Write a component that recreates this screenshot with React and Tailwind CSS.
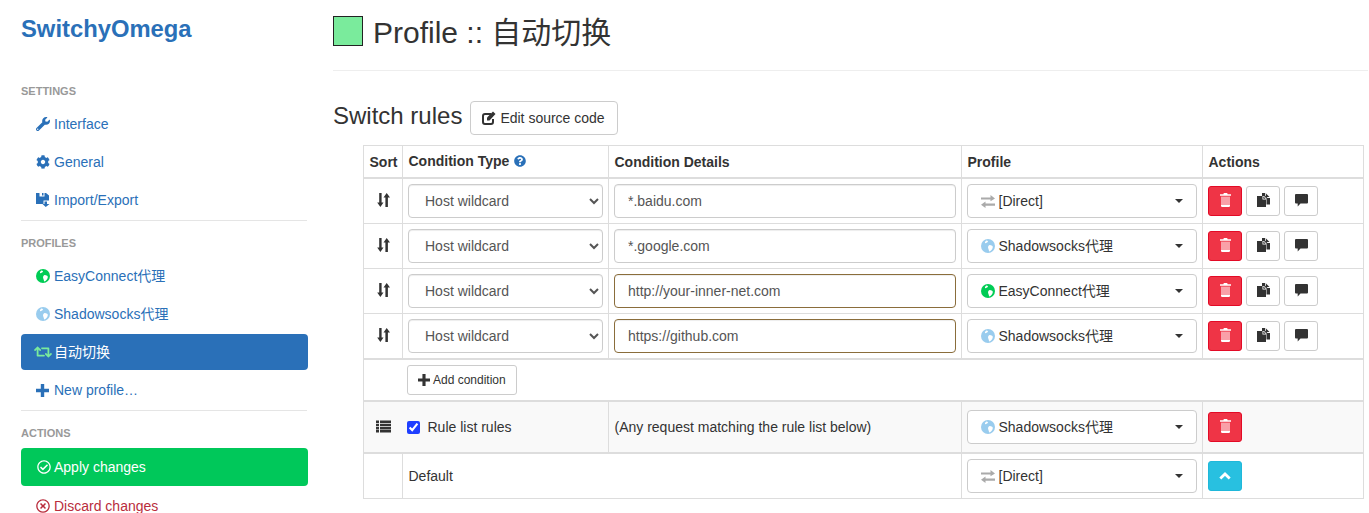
import React from "react";
import { FaWrench, FaCog, FaRetweet, FaRegCheckCircle, FaRegTimesCircle, FaQuestionCircle } from "react-icons/fa";

const Sv = ({ w = 14, h = 14, vb, className, children }) => (
  <svg width={w} height={h} viewBox={vb || `0 0 ${w} ${h}`} className={className} fill="currentColor">{children}</svg>
);
const SaveI = ({ className }) => (
  <Sv w={14} h={14} className={className}>
    <path d="M0 0h3.500v3.500h5V0h1.500L13 2.500V7.500H7.500V11H0z" />
    <path d="M6 0h1.500v2.500H6z" />
    <path d="M8.500 8.500h2.500V11h2.500L9.750 14 6.500 11h2z" />
  </Sv>
);
const PlusI = ({ className, s = 13 }) => (
  <Sv w={s} h={s} vb="0 0 13 13" className={className}><path d="M4.800 0h3.400v4.800H13v3.400H8.200V13H4.800V8.200H0V4.800h4.800z" /></Sv>
);
const SortI = () => (
  <Sv w={13} h={14} className="text-[#333]">
    <path d="M2.200 0h2.400v9.500h1.900L3.400 14 .2 9.500h2z" />
    <path d="M8.400 14V4.500H6.500L9.700 0 13 4.500h-2.100V14z" />
  </Sv>
);
const ListI = () => (
  <Sv w={15} h={13} className="text-[#333]">
    <path d="M0 .5h3v2.500H0zM4 .5h11v2.500H4zM0 3.700h3v2.500H0zM4 3.700h11v2.500H4zM0 6.900h3v2.500H0zM4 6.900h11v2.500H4zM0 10.100h3v2.500H0zM4 10.100h11v2.500H4z" />
  </Sv>
);
const TrashI = () => (
  <Sv w={11} h={14} className="mb-[3px]">
    <path fill="#fff" d="M3.800 0h3.400l.4 1.200H11v1.600H0V1.200h3.400z" />
    <path fill="#f9a0a8" d="M1 3.600h9v8.400H1z" />
    <path fill="#fff" d="M1 12h9v.8q0 1.200-1.200 1.200H2.200Q1 14 1 12.800z" />
  </Sv>
);
const CopyI = () => (
  <Sv w={13} h={14} className="mb-[2px] text-[#333]">
    <path d="M5 0h3.200v2.500L10.500 5H13v6.500H9.500V5.500L7 3H5z" />
    <path d="M9 0.500l3.500 3.500H9z" />
    <path d="M0 3h5.500v3.500H9V14H0z" />
    <path d="M6.300 3.300 8.700 5.700H6.300z" />
  </Sv>
);
const CommentI = () => (
  <Sv w={13} h={13} className="mb-[2px] text-[#333]">
    <path d="M1 0h11q1 0 1 1v7.500q0 1-1 1H5.500L2.700 12.500V9.500H1q-1 0-1-1V1q0-1 1-1z" />
  </Sv>
);
const TransferI = () => (
  <Sv w={14} h={13} className="text-[#aaa]">
    <path d="M0 2.500h9.500V0L14 3.500 9.500 6.300V4.500H0z" />
    <path d="M14 8.500H4.500V6.500L0 9.800 4.500 13v-2.200H14z" />
  </Sv>
);
const EditI = () => (
  <svg width="14" height="14" viewBox="0 0 14 14" className="text-[#333]">
    <path d="M9 3H3Q1 3 1 5v6q0 2 2 2h6q2 0 2-2V8" fill="none" stroke="currentColor" strokeWidth="2" />
    <path d="M5 9.500V6.500L11 .5l2.500 2.500L7.500 9.500z" fill="currentColor" />
  </svg>
);
const Globe = ({ color }) => (
  <svg width="14" height="14" viewBox="0 0 14 14">
    <circle cx="7" cy="7" r="7" fill={color} />
    <path fill="#fff" d="M5.500 1.500C4 2.300 3.500 3.500 4.300 4.300 5.500 3.800 6.500 3.500 7 2.500 6.800 1.800 6 1.500 5.500 1.500z" />
    <path fill="#fff" d="M8.500 6c1 0 2 .5 3 1 .5 1 .3 2-.3 3-1 1.500-2 2.300-3 2.500-.5-1-.5-2.200-1-3.200C6.700 8 7.500 6.500 8.500 6z" />
  </svg>
);
const ChevronI = () => (
  <svg width="12" height="8" viewBox="0 0 12 8" fill="none">
    <path d="M1.300 6.500 6 2l4.700 4.500" stroke="#fff" strokeWidth="2.800" />
  </svg>
);

const NavLink = ({ icon, children, className = "" }) => (
  <a className={`flex h-[38px] items-center pl-[15px] text-[14px] text-[#2a70b8] ${className}`}>
    <span className="flex w-[18px] shrink-0">{icon}</span>
    {children}
  </a>
);
const Label = ({ children }) => (
  <div className="text-[11px] leading-[16px] font-bold uppercase text-[#999]">{children}</div>
);

const TypeSelect = () => (
  <select defaultValue="h" className="block h-[34px] w-full rounded-[4px] border border-[#ccc] bg-white px-3 text-[14px] text-[#555] shadow-[inset_0_1px_1px_rgba(0,0,0,0.075)]">
    <option value="h">Host wildcard</option>
  </select>
);
const Field = ({ value, warn }) => (
  <input
    readOnly
    value={value}
    className={`block h-[34px] w-full rounded-[4px] border bg-white px-[13px] text-[14px] text-[#555] shadow-[inset_0_1px_1px_rgba(0,0,0,0.075)] ${warn ? "border-[#8a6d3b]" : "border-[#ccc]"}`}
  />
);
const ProfileBtn = ({ icon, label }) => (
  <button className="flex h-[34px] w-full items-center rounded-[4px] border border-[#ccc] bg-white pr-[13px] pl-[13px] text-[14px] text-[#333]">
    <span className="flex w-[17.5px] shrink-0">{icon}</span>
    <span className="flex-1 text-left">{label}</span>
    <span className="h-0 w-0 border-x-4 border-t-4 border-x-transparent border-t-[#333]" />
  </button>
);
const SmallBtn = ({ children, className }) => (
  <button className={`flex h-[30px] w-[34px] items-center justify-center rounded-[3px] border ${className}`}>{children}</button>
);
const Del = () => <SmallBtn className="border-[#e30a26] bg-[#ef3446]"><TrashI /></SmallBtn>;
const White = ({ children }) => <SmallBtn className="border-[#ccc] bg-white">{children}</SmallBtn>;

const direct = <TransferI />;
const ss = <Globe color="#99ccee" />;
const ec = <Globe color="#00cc55" />;

const rows = [
  { v: "*.baidu.com", icon: direct, p: "[Direct]" },
  { v: "*.google.com", icon: ss, p: "Shadowsocks代理" },
  { v: "http://your-inner-net.com", icon: ec, p: "EasyConnect代理", warn: true },
  { v: "https://github.com", icon: ss, p: "Shadowsocks代理", warn: true },
];

const td = "border border-[#ddd] p-[5px] align-middle";
const txt = "border border-[#ddd] py-[5px] pr-[5px] pl-[5.5px] align-middle";
const th = "border border-[#ddd] border-b-2 py-[5px] pr-[5px] pl-[5.5px] text-left font-bold align-middle";

export default function App() {
  return (
    <div className="flex h-[513px] overflow-hidden bg-white font-['Liberation_Sans','Noto_Sans_CJK_SC',sans-serif] text-[14px] leading-[20px] text-[#333]">
      <aside className="ml-[21px] w-[287px] shrink-0">
        <h1 className="mt-[15px] text-[23.8px] leading-[28px] font-bold text-[#2a70b8]">SwitchyOmega</h1>
        <div className="mt-[40px]"><Label>Settings</Label></div>
        <nav className="mt-[6px]">
          <NavLink icon={<FaWrench size={14} />}>Interface</NavLink>
          <NavLink icon={<FaCog size={14} />}>General</NavLink>
          <NavLink icon={<SaveI />}>Import/Export</NavLink>
        </nav>
        <hr className="mt-px mr-px border-[#e5e5e5]" />
        <div className="mt-[14px]"><Label>Profiles</Label></div>
        <nav className="mt-[6px]">
          <NavLink icon={<Globe color="#00cc55" />}>EasyConnect代理</NavLink>
          <NavLink icon={<Globe color="#99ccee" />}>Shadowsocks代理</NavLink>
          <a className="mt-px flex h-[36px] items-center rounded-[4px] bg-[#2a70b8] pl-[13px] text-[14px] text-white">
            <span className="flex w-[20px] shrink-0"><FaRetweet size={18} color="#7aeb9c" /></span>
            自动切换
          </a>
          <NavLink icon={<PlusI className="text-[#2a70b8]" />} className="mt-px">New profile…</NavLink>
        </nav>
        <hr className="mt-px mr-px border-[#e5e5e5]" />
        <div className="mt-[14px]"><Label>Actions</Label></div>
        <nav className="mt-[7px]">
          <a className="flex h-[38px] items-center rounded-[4px] bg-[#00c85a] pl-[16px] text-[14px] text-white">
            <span className="flex w-[17px] shrink-0"><FaRegCheckCircle size={14} /></span>
            Apply changes
          </a>
          <NavLink icon={<FaRegTimesCircle size={14} />} className="mt-px !text-[#b92c3c]">Discard changes</NavLink>
        </nav>
      </aside>

      <main className="ml-[25px] w-[1035px] shrink-0">
        <div className="mt-[16px] flex h-[30px] items-center">
          <span className="h-[30px] w-[30px] shrink-0 border border-[#222] bg-[#7aeb9c]" />
          <h2 className="ml-[10px] pt-[3px] text-[30px] leading-[34px] font-normal">Profile :: 自动切换</h2>
        </div>
        <hr className="mt-[24px] border-[#eee]" />
        <div className="mt-[30px] flex items-center">
          <h3 className="pb-[4px] text-[24px] leading-[30px] font-normal">Switch rules</h3>
          <button className="ml-[8px] flex h-[34px] items-center gap-[4px] rounded-[4px] border border-[#ccc] bg-white pr-[12px] pl-[11px] text-[14px] text-[#333]">
            <EditI />Edit source code
          </button>
        </div>

        <table className="mt-[10px] ml-[30px] w-[1000px] table-fixed border-collapse">
          <colgroup>
            <col className="w-[39px]" />
            <col className="w-[206px]" />
            <col className="w-[353px]" />
            <col className="w-[241px]" />
            <col className="w-[161px]" />
          </colgroup>
          <thead>
            <tr>
              <th className={th}>Sort</th>
              <th className={th}>
                <span className="flex items-center gap-[5px] pb-px">Condition Type <FaQuestionCircle size={12} className="text-[#2a70b8]" /></span>
              </th>
              <th className={th}>Condition Details</th>
              <th className={th}>Profile</th>
              <th className={th}>Actions</th>
            </tr>
          </thead>
          <tbody>
            {rows.map((r) => (
              <tr key={r.v}>
                <td className={td}><div className="flex justify-center pb-[2px]"><SortI /></div></td>
                <td className={td}><TypeSelect /></td>
                <td className={td}><Field value={r.v} warn={r.warn} /></td>
                <td className={td}><ProfileBtn icon={r.icon} label={r.p} /></td>
                <td className={td}>
                  <div className="flex gap-[4px]">
                    <Del />
                    <White><CopyI /></White>
                    <White><CommentI /></White>
                  </div>
                </td>
              </tr>
            ))}
          </tbody>
          <tbody className="border-t-2 border-[#ddd]">
            <tr>
              <td colSpan={5} className={`${td} pl-[43px]`}>
                <button className="flex h-[30px] items-center gap-[3px] rounded-[3px] border border-[#ccc] bg-white pr-[10px] pl-[10px] text-[12px] text-[#333]">
                  <PlusI className="text-[#333]" s={12} />Add condition
                </button>
              </td>
            </tr>
          </tbody>
          <tbody className="border-t-2 border-[#ddd]">
            <tr className="h-[52px] bg-[#f9f9f9]">
              <td className={`${td} border-r-0`}><div className="flex justify-center pb-[2px]"><ListI /></div></td>
              <td className={`${td} border-l-0`}>
                <label className="-ml-px flex items-center gap-[8px]">
                  <input type="checkbox" defaultChecked className="m-0 h-[13px] w-[13px] accent-[#1f3fff]" />
                  Rule list rules
                </label>
              </td>
              <td className={txt}>(Any request matching the rule list below)</td>
              <td className={td}><ProfileBtn icon={ss} label="Shadowsocks代理" /></td>
              <td className={td}><Del /></td>
            </tr>
          </tbody>
          <tbody className="border-t-2 border-[#ddd]">
            <tr>
              <td className={td}></td>
              <td colSpan={2} className={txt}>Default</td>
              <td className={td}><ProfileBtn icon={direct} label="[Direct]" /></td>
              <td className={td}>
                <SmallBtn className="border-[#1fb8da] bg-[#28c0e0]"><ChevronI /></SmallBtn>
              </td>
            </tr>
          </tbody>
        </table>
      </main>
    </div>
  );
}
